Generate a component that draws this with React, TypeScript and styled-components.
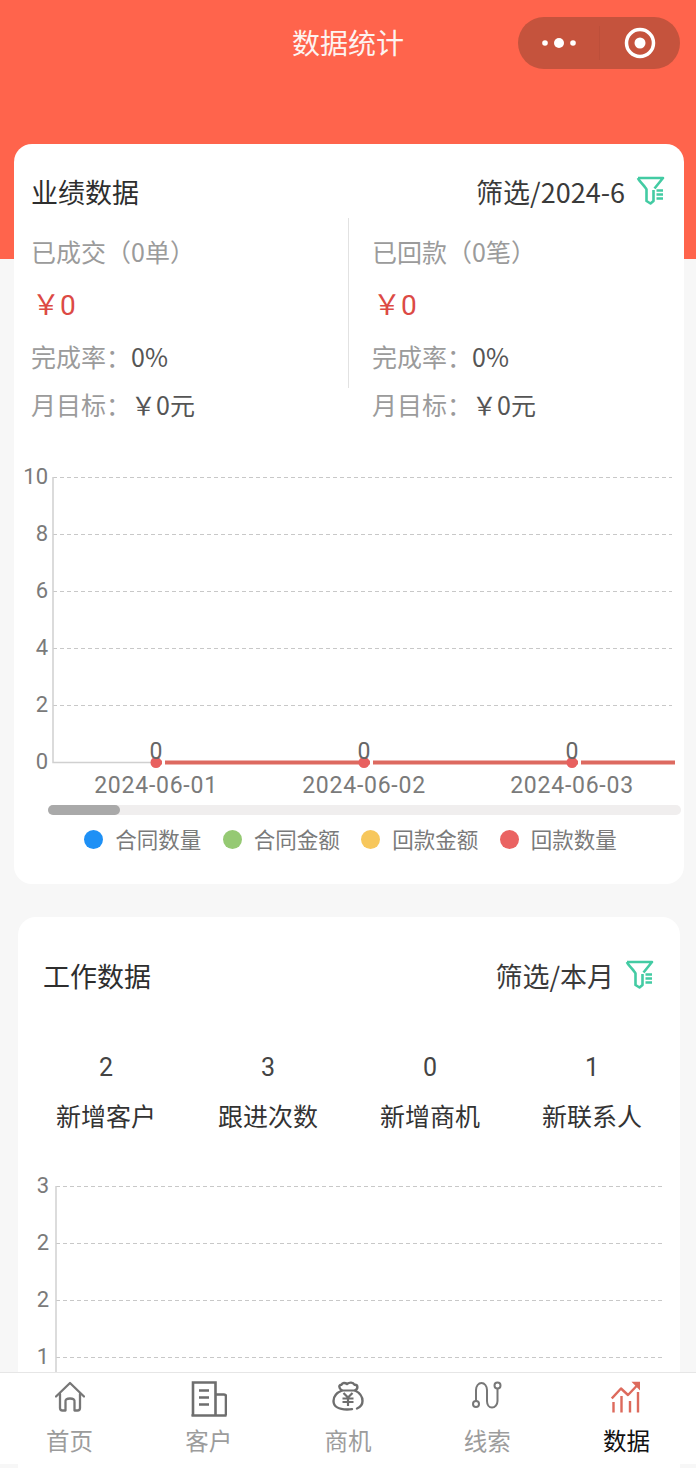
import React from "react";
import styled, { createGlobalStyle } from "styled-components";

const FONT = `"Noto Sans CJK SC", "Noto Sans", sans-serif`;
const NUM = `Roboto, "Noto Sans CJK SC", sans-serif`;

const Global = createGlobalStyle`
  html, body { margin: 0; padding: 0; background: #f7f7f7; }
  * { box-sizing: border-box; }
`;

const Page = styled.div`
  position: relative;
  width: 696px;
  height: 1468px;
  overflow: hidden;
  font-family: ${FONT};
  background: linear-gradient(#ff644c 0, #ff644c 259px, #f7f7f7 259px);
`;

const NavBar = styled.header`
  position: relative;
  height: 88px;
  padding-bottom: 4px;
  display: flex;
  align-items: center;
  justify-content: center;
  color: #fdf3f0;
  font-size: 28px;
  line-height: 40px;
`;

const Capsule = styled.div`
  position: absolute;
  left: 518px;
  top: 17px;
  width: 162px;
  height: 52px;
  border-radius: 26px;
  background: #c5533d;
  display: grid;
  grid-template-columns: 81px 81px;
  align-items: center;
  justify-items: center;
`;

const CapsuleSep = styled.div`
  border-left: 1px solid #bd4f3a;
  height: 34px;
  display: flex;
  align-items: center;
  justify-content: center;
  width: 100%;
`;

const Card = styled.section<{ $ml: number; $mr: number; $top: number; $height: number }>`
  margin: ${(p) => p.$top}px ${(p) => p.$mr}px 0 ${(p) => p.$ml}px;
  height: ${(p) => p.$height}px;
  background: #fff;
  border-radius: 18px;
`;

const CardHead = styled.div<{ $pt: number; $px: number; $pr: number }>`
  display: flex;
  align-items: center;
  justify-content: space-between;
  padding: ${(p) => p.$pt}px ${(p) => p.$pr}px 0 ${(p) => p.$px}px;
  height: ${(p) => p.$pt + 36}px;
`;

const CardTitle = styled.h2`
  margin: 0;
  font-size: 27px;
  font-weight: 400;
  line-height: 36px;
  color: #2e2e2e;
`;

const Filter = styled.div`
  display: flex;
  align-items: center;
  gap: 11px;
  font-size: 27px;
  line-height: 36px;
  color: #3a3a3a;
  svg { margin-top: -4px; }
`;

const Stats = styled.div`
  display: grid;
  grid-template-columns: 335px 335px;
  margin-top: 8px;
`;

const StatCol = styled.div<{ $divided?: boolean; $pl: number }>`
  height: 170px;
  padding-left: ${(p) => p.$pl}px;
  ${(p) => (p.$divided ? "border-right: 1px solid #e2e2e2;" : "")}
`;

const StatLabel = styled.div`
  font-size: 25px;
  line-height: 36px;
  height: 36px;
  margin-top: 15px;
  color: #9b9b9b;
  white-space: nowrap;
`;

const Amount = styled.div`
  font-family: ${NUM};
  font-size: 28px;
  line-height: 36px;
  height: 36px;
  margin-top: 19px;
  padding-left: 1px;
  color: #dc4a44;
`;

const Rate = styled.div`
  font-size: 25px;
  line-height: 36px;
  height: 36px;
  margin-top: 14px;
  color: #9b9b9b;
  white-space: nowrap;
  span { color: #555; font-size: 25px; }
`;

const Target = styled(Rate)<{ $pl: number }>`
  margin-top: 0;
  line-height: 32px;
  padding-left: ${(p) => p.$pl}px;
`;

const ChartSvg = styled.svg`
  display: block;
`;

const ChartBox = styled.div<{ $mt: number }>`
  margin-top: ${(p) => p.$mt}px;
`;

const ScrollTrack = styled.div`
  margin: 5px 3px 0 34px;
  height: 10px;
  border-radius: 5px;
  background: #f0eeee;
`;

const ScrollThumb = styled.div`
  width: 72px;
  height: 10px;
  border-radius: 5px;
  background: #a9a9a9;
`;

const Legend = styled.div`
  display: flex;
  justify-content: center;
  gap: 21.5px;
  margin-top: 9px;
  padding-left: 3px;
`;

const LegendItem = styled.div`
  display: flex;
  align-items: center;
  gap: 12px;
  font-size: 21.5px;
  line-height: 30px;
  color: #7a7a7a;
`;

const Dot = styled.i<{ $color: string }>`
  display: block;
  width: 19px;
  height: 19px;
  border-radius: 50%;
  background: ${(p) => p.$color};
`;

const WorkGrid = styled.div`
  display: grid;
  grid-template-columns: repeat(4, 162px);
  margin: 56px 0 0 7px;
  text-align: center;
  color: #333;
  font-size: 25px;
`;

const WorkCount = styled.div`
  font-family: ${NUM};
  font-size: 25px;
  line-height: 36px;
  color: #444;
`;

const WorkLabel = styled.div`
  margin-top: 11px;
  line-height: 36px;
`;

const TabBar = styled.nav`
  position: absolute;
  left: 0;
  right: 0;
  top: 1372px;
  height: 92px;
  background: #fff;
  border-top: 1px solid #e6e6e6;
  display: grid;
  grid-template-columns: repeat(5, 1fr);
`;

const Tab = styled.div<{ $active?: boolean }>`
  display: flex;
  flex-direction: column;
  align-items: center;
  font-size: 23.5px;
  line-height: 32px;
  color: ${(p) => (p.$active ? "#111" : "#9c9c9c")};
`;

const TabIcon = styled.div`
  height: 51px;
  padding-top: 8px;
  display: flex;
  align-items: flex-start;
  justify-content: center;
`;

const FunnelIcon = () => (
  <svg width="29" height="29" viewBox="0 0 29 29" fill="none" stroke="#43cba3" strokeWidth="2.6" strokeLinejoin="round">
    <path d="M2 2H27L18.5 12.5" />
    <path d="M2 2C3 5 9.5 11 10.5 13.5V25L14.5 27.5L17.5 25V14" />
    <path d="M20.5 14.5H27M20.5 18.5H27M20.5 22.5H27" />
  </svg>
);

const gridText = { fontFamily: NUM, fontSize: 22, fill: "#7a7a7a" };

const PerfChart = () => {
  const ys = [0, 57, 114, 171, 228];
  const labels = ["10", "8", "6", "4", "2"];
  const pts = [
    { x: 142, d: "2024-06-01" },
    { x: 350, d: "2024-06-02" },
    { x: 558, d: "2024-06-03" },
  ];
  return (
    <ChartSvg width="670" height="336" viewBox="0 0 670 336">
      {ys.map((y, i) => (
        <g key={y}>
          <line x1="39" x2="658" y1={y + 13.5} y2={y + 13.5} stroke="#c8c8c8" strokeDasharray="4 3" />
          <text {...gridText} x="34" y={y + 20} textAnchor="end">{labels[i]}</text>
        </g>
      ))}
      <text {...gridText} x="34" y="305" textAnchor="end">0</text>
      <path d="M39 13V298.5H142" fill="none" stroke="#d0d0d0" strokeWidth="1.5" />
      <path d="M142 298.5H661" stroke="#dd6a60" strokeWidth="4" />
      {pts.map((p) => (
        <g key={p.x}>
          <path d={`M${p.x + 6} 298.5H${p.x + 9}`} stroke="#fff" strokeWidth="5" />
          <circle cx={p.x} cy="298.5" r="5.5" fill="#e8605f" />
          <text x={p.x} y="295" textAnchor="middle" fontFamily={NUM} fontSize="23" fill="#666">0</text>
          <text x={p.x} y="329" textAnchor="middle" fontFamily={NUM} fontSize="23" letterSpacing="0.75" fill="#7a7a7a">{p.d}</text>
        </g>
      ))}
    </ChartSvg>
  );
};

const WorkChart = () => {
  const rows = [
    { y: 0, l: "3" },
    { y: 57, l: "2" },
    { y: 114, l: "2" },
    { y: 171, l: "1" },
  ];
  return (
    <ChartSvg width="662" height="200" viewBox="0 0 662 200">
      {rows.map((r) => (
        <g key={r.y}>
          <line x1="38" x2="646" y1={r.y + 13.5} y2={r.y + 13.5} stroke="#c8c8c8" strokeDasharray="4 3" />
          <text {...gridText} x="31" y={r.y + 20} textAnchor="end">{r.l}</text>
        </g>
      ))}
      <path d="M38 13V200" fill="none" stroke="#d0d0d0" strokeWidth="1.5" />
    </ChartSvg>
  );
};

const HomeIcon = () => (
  <svg width="30" height="31" viewBox="0 0 30 31" fill="none" stroke="#777" strokeWidth="2.3" strokeLinejoin="round" strokeLinecap="round">
    <path d="M1 15.5L15 2L29 15.5" />
    <path d="M5 13V27C5 28.5 6 29.5 7.5 29.5H10.5V21C10 18.5 12 17.5 15 17.5C18 17.5 20 18.5 19.5 21V29.5H22.5C24 29.5 25 28.5 25 27V13" />
  </svg>
);
const BuildingIcon = () => (
  <svg width="36" height="36" viewBox="0 0 36 36" fill="none" stroke="#6e6e6e" strokeWidth="2.6">
    <path d="M2 35V1.5H24.5V35" />
    <path d="M24.5 13.5H33C34.5 13.5 35 14 35 15.5V34.5" />
    <path d="M0.5 34.5H35.5" />
    <path d="M8 9.5H18M8 16.5H18M8 23.5H18" />
  </svg>
);
const BagIcon = () => (
  <svg width="32" height="30" viewBox="0 0 32 30" fill="none" stroke="#6e6e6e" strokeWidth="2.4" strokeLinecap="round" strokeLinejoin="round">
    <path d="M25 27.5C28.5 26 30.5 23.5 30.5 20C30.5 15.5 27 11.5 23 9.5C26.5 7.5 26 3.5 22.5 3.8C21 1 17.5 1 15 3C13 1.5 10.5 1.5 9.5 3.8C6.5 3.5 6.5 7.5 10 9.5C5 11.5 1.5 15.5 1.5 20C1.5 25.5 7 28.5 15 28.5C17 28.5 18.5 28.4 20 28.1" />
    <path d="M10 9.5H23" strokeWidth="1.8" />
    <path d="M11.5 12L16 16.5L20.5 12M16 16.5V25M10.5 17.5H21.5M10.5 21H21.5" strokeWidth="2.2" strokeLinecap="butt" />
  </svg>
);
const RouteIcon = () => (
  <svg width="30" height="28" viewBox="0 0 30 28" fill="none" stroke="#777" strokeWidth="2">
    <circle cx="4" cy="23" r="3" />
    <circle cx="25.5" cy="4.5" r="3" />
    <path d="M4 20V9C4 5 6.5 2 9.5 2C12.5 2 15 5 15 9V20C15 23.5 17 26.5 20 26.5C23 26.5 25.5 23.5 25.5 20V7.5" />
  </svg>
);
const DataIcon = () => (
  <svg width="30" height="32" viewBox="0 0 30 32" fill="none" stroke="#dd6a5c" strokeWidth="2.4" strokeLinejoin="round">
    <path d="M0.8 17.5L10 7.5L17 14L27 3.5" />
    <path d="M20.5 0.8H29V9.5Z" fill="#dd6a5c" stroke="none" />
    <path d="M2.5 21V31.5M10.5 15V31.5M19 20V31.5M27 11V31.5" />
  </svg>
);

const legend = [
  { c: "#1e90f5", t: "合同数量" },
  { c: "#95c973", t: "合同金额" },
  { c: "#f7c75c", t: "回款金额" },
  { c: "#ea6362", t: "回款数量" },
];
const work = [
  { n: 2, t: "新增客户" },
  { n: 3, t: "跟进次数" },
  { n: 0, t: "新增商机" },
  { n: 1, t: "新联系人" },
];
const tabs = [
  { t: "首页", i: <HomeIcon /> },
  { t: "客户", i: <BuildingIcon /> },
  { t: "商机", i: <BagIcon /> },
  { t: "线索", i: <RouteIcon /> },
  { t: "数据", i: <DataIcon />, a: true },
];

export default function App() {
  return (
    <Page>
      <Global />
      <NavBar>
        数据统计
        <Capsule>
          <svg width="36" height="12" viewBox="0 0 36 12" fill="#fff">
            <circle cx="4" cy="6" r="2.8" />
            <circle cx="18" cy="6" r="5" />
            <circle cx="32" cy="6" r="2.8" />
          </svg>
          <CapsuleSep>
            <svg width="32" height="32" viewBox="0 0 32 32" fill="none">
              <circle cx="16" cy="16" r="13.5" stroke="#fff" strokeWidth="3.5" />
              <circle cx="16" cy="16" r="5.5" fill="#fff" />
            </svg>
          </CapsuleSep>
        </Capsule>
      </NavBar>
      <Card $ml={14} $mr={12} $top={56} $height={740}>
        <CardHead $pt={30} $px={17} $pr={19}>
          <CardTitle>业绩数据</CardTitle>
          <Filter>筛选/2024-6<FunnelIcon /></Filter>
        </CardHead>
        <Stats>
          <StatCol $divided $pl={17}>
            <StatLabel>已成交（0单）</StatLabel>
            <Amount>￥0</Amount>
            <Rate>完成率：<span>0%</span></Rate>
          </StatCol>
          <StatCol $pl={23}>
            <StatLabel>已回款（0笔）</StatLabel>
            <Amount>￥0</Amount>
            <Rate>完成率：<span>0%</span></Rate>
          </StatCol>
          <Target $pl={17}>月目标：<span>￥0元</span></Target>
          <Target $pl={23}>月目标：<span>￥0元</span></Target>
        </Stats>
        <ChartBox $mt={40}><PerfChart /></ChartBox>
        <ScrollTrack><ScrollThumb /></ScrollTrack>
        <Legend>
          {legend.map((l) => (
            <LegendItem key={l.t}><Dot $color={l.c} />{l.t}</LegendItem>
          ))}
        </Legend>
      </Card>
      <Card $ml={18} $mr={16} $top={33} $height={600}>
        <CardHead $pt={41} $px={25} $pr={26}>
          <CardTitle>工作数据</CardTitle>
          <Filter>筛选/本月<FunnelIcon /></Filter>
        </CardHead>
        <WorkGrid>
          {work.map((w) => (
            <div key={w.t}>
              <WorkCount>{w.n}</WorkCount>
              <WorkLabel>{w.t}</WorkLabel>
            </div>
          ))}
        </WorkGrid>
        <ChartBox $mt={40}><WorkChart /></ChartBox>
      </Card>
      <TabBar>
        {tabs.map((t) => (
          <Tab key={t.t} $active={t.a}>
            <TabIcon>{t.i}</TabIcon>
            {t.t}
          </Tab>
        ))}
      </TabBar>
    </Page>
  );
}
